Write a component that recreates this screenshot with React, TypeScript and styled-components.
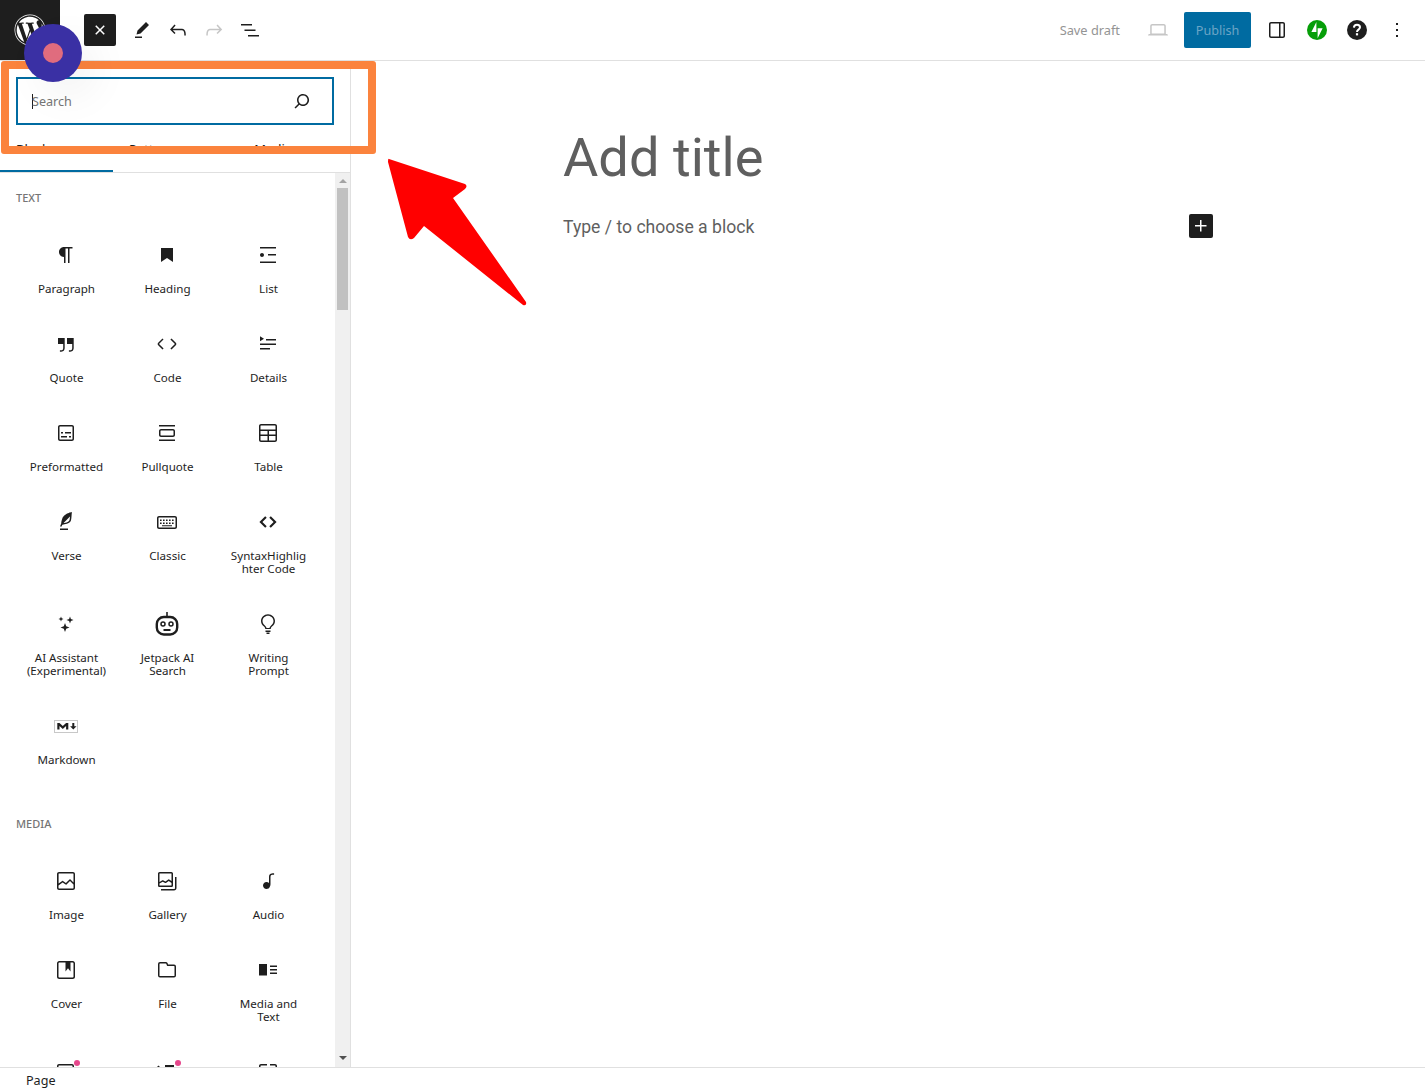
import React from "react";
import styled, { createGlobalStyle } from "styled-components";
import { FaWordpress } from "react-icons/fa";

const GlobalStyle = createGlobalStyle`
  html, body {
    margin: 0;
    padding: 0;
    background: #fff;
  }
  * {
    box-sizing: border-box;
  }
`;

const UI_FONT = `"Noto Sans", "Open Sans", sans-serif`;

const Page = styled.div`
  position: relative;
  display: flex;
  flex-direction: column;
  width: 1425px;
  height: 1092px;
  overflow: hidden;
  font-family: ${UI_FONT};
  color: #1e1e1e;
  background: #fff;
`;

const Header = styled.header`
  display: flex;
  align-items: center;
  flex: 0 0 61px;
  border-bottom: 1px solid #e0e0e0;
`;

const LogoBox = styled.div`
  display: flex;
  align-items: center;
  justify-content: center;
  width: 60px;
  height: 60px;
  background: #1e1e1e;
  color: #fff;
`;

const ToolGroup = styled.div`
  display: flex;
  align-items: center;
  gap: 4px;
  margin-left: 24px;
`;

const ToolButton = styled.div<{ $active?: boolean; $muted?: boolean }>`
  display: flex;
  align-items: center;
  justify-content: center;
  width: 32px;
  height: 32px;
  border-radius: 2px;
  margin-right: ${(p) => (p.$active ? "6px" : "0")};
  background: ${(p) => (p.$active ? "#1e1e1e" : "transparent")};
  color: ${(p) => (p.$active ? "#fff" : p.$muted ? "#c6c6c6" : "#1e1e1e")};
`;

const HeaderRight = styled.div`
  display: flex;
  align-items: center;
  margin-left: auto;
  padding-right: 8px;
`;

const SaveDraft = styled.span`
  font-size: 12.8px;
  color: #949494;
  margin-right: 26px;
`;

const DeviceIcon = styled.div`
  display: flex;
  color: #c6c6c6;
  margin-right: 14px;
`;

const PublishButton = styled.div`
  display: flex;
  align-items: center;
  justify-content: center;
  width: 67px;
  height: 36px;
  border-radius: 2px;
  background: #006ba1;
  color: #6ba5c6;
  font-size: 12.6px;
  margin-right: 6px;
`;

const SettingsButton = styled.div`
  display: flex;
  align-items: center;
  justify-content: center;
  width: 40px;
  height: 40px;
`;

const Body = styled.div`
  display: flex;
  flex: 1;
  min-height: 0;
`;

const Inserter = styled.aside`
  display: flex;
  flex-direction: column;
  flex: 0 0 351px;
  border-right: 1px solid #e0e0e0;
`;

const SearchArea = styled.div`
  padding: 16px 16px 0;
`;

const SearchBox = styled.div`
  display: flex;
  align-items: center;
  justify-content: space-between;
  height: 48px;
  padding: 0 18px 0 14px;
  border: 2px solid #006ba1;
  font-size: 12.6px;
  color: #757575;
`;

const SearchIcon = styled.span`
  display: flex;
  color: #1e1e1e;
`;

const Caret = styled.span`
  display: inline-block;
  width: 1px;
  height: 15px;
  margin-right: -1px;
  background: #1e1e1e;
  vertical-align: -3px;
`;

const Tabs = styled.div`
  display: flex;
  flex: 0 0 48px;
  border-bottom: 1px solid #e0e0e0;
`;

const Tab = styled.div<{ $active?: boolean }>`
  flex: 1 1 auto;
  height: 47px;
  padding: 16px 16px 0;
  font-size: 13px;
  line-height: 16px;
  border-bottom: 2px solid ${(p) => (p.$active ? "#006ba1" : "transparent")};
`;

const ScrollRow = styled.div`
  display: flex;
  flex: 1;
  min-height: 0;
`;

const BlockList = styled.div`
  flex: 1;
  min-width: 0;
  overflow: hidden;
  padding: 17px 0 0 16px;
`;

const GroupTitle = styled.h2`
  margin: 0 0 17px;
  font-size: 11px;
  font-weight: 500;
  line-height: 16px;
  text-transform: uppercase;
  color: #757575;
`;

const BlockGrid = styled.div`
  display: grid;
  grid-template-columns: repeat(3, 101px);
  margin-bottom: 33px;
`;

const BlockItem = styled.div`
  display: flex;
  flex-direction: column;
  align-items: center;
  padding: 20px 0 17px;
  text-align: center;
`;

const BlockIcon = styled.div`
  position: relative;
  display: flex;
  width: 24px;
  height: 24px;
  margin: 0 1px 15px 0;
`;

const Dot = styled.span`
  position: absolute;
  top: 0;
  right: -2px;
  width: 6px;
  height: 6px;
  border-radius: 50%;
  background: #e6478c;
`;

const BlockLabel = styled.span`
  max-width: 82px;
  font-size: 11.6px;
  line-height: 13px;
  overflow-wrap: anywhere;
`;

const ScrollTrack = styled.div`
  display: flex;
  flex-direction: column;
  align-items: center;
  flex: 0 0 15px;
  background: #f0f0f0;
`;

const ScrollArrow = styled.span<{ $down?: boolean }>`
  flex: 0 0 4px;
  width: 8px;
  height: 4px;
  margin-top: ${(p) => (p.$down ? "auto" : "6px")};
  margin-bottom: ${(p) => (p.$down ? "7px" : "0")};
  border-left: 4px solid transparent;
  border-right: 4px solid transparent;
  ${(p) =>
    p.$down
      ? "border-top: 4px solid #505050;"
      : "border-bottom: 4px solid #a3a3a3;"}
`;

const ScrollThumb = styled.div`
  width: 11px;
  height: 122px;
  margin-top: 5px;
  background: #c1c1c1;
`;

const Editor = styled.main`
  flex: 1;
  min-width: 0;
  padding: 59px 0 0 212px;
  font-family: Roboto, sans-serif;
  color: #5f5f5f;
`;

const TitleText = styled.h1`
  margin: 0;
  font-size: 54.2px;
  font-weight: 400;
  line-height: 76px;
`;

const ParagraphRow = styled.div`
  display: flex;
  align-items: flex-start;
  justify-content: space-between;
  width: 650px;
  margin-top: 18px;
`;

const ParagraphHint = styled.p`
  margin: -1px 0 0;
  font-size: 17.6px;
  line-height: 28px;
`;

const AddBlock = styled.div`
  display: flex;
  align-items: center;
  justify-content: center;
  width: 24px;
  height: 24px;
  border-radius: 2px;
  background: #1e1e1e;
  color: #fff;
`;

const Footer = styled.footer`
  flex: none;
  height: 25px;
  padding-left: 26px;
  border-top: 1px solid #e0e0e0;
  font-size: 12.6px;
  line-height: 26px;
`;

/* tutorial annotations painted over the editor */
const Highlight = styled.div`
  position: absolute;
  left: 1px;
  top: 61px;
  width: 375px;
  height: 93px;
  border: 8px solid #fb833d;
  border-radius: 3px;
`;

const Pointer = styled.svg`
  position: absolute;
  left: 380px;
  top: 150px;
`;

const ClickDot = styled.div`
  position: absolute;
  left: 24px;
  top: 24px;
  display: flex;
  align-items: center;
  justify-content: center;
  width: 58px;
  height: 58px;
  border-radius: 50%;
  background: #3a30a4;
  box-shadow: 15px 15px 40px rgba(0, 0, 0, 0.05);
`;

const ClickDotCore = styled.span`
  width: 20px;
  height: 20px;
  border-radius: 50%;
  background: #e06c7e;
`;

const Icon: React.FC<{ d: string }> = ({ d }) => (
  <svg width={24} height={24} viewBox="0 0 24 24" fill="currentColor">
    <path d={d} fillRule="evenodd" clipRule="evenodd" />
  </svg>
);

const paths = {
  pencil: "m19 7-3-3-8.5 8.5-1 4 4-1L19 7Zm-7 11.5H5V20h7v-1.5Z",
  undo: "M18.3 11.7c-.6-.6-1.4-.9-2.3-.9H6.7l2.9-3.3-1.1-1-4.5 5L8.5 16l1-1-2.7-2.7H16c.5 0 .9.2 1.3.5 1 1 1 3.4 1 4.5v.3h1.5v-.2c0-1.5 0-4.3-1.5-5.7z",
  redo: "M15.6 6.5l-1.1 1 2.9 3.3H8c-.9 0-1.7.3-2.3.9-1.4 1.5-1.4 4.2-1.4 5.6v.2h1.5v-.3c0-1.1 0-3.5 1-4.5.3-.3.7-.5 1.3-.5h9.2L14.5 15l1.1 1.1 4.6-4.6-4.6-5z",
  listView: "M3 6h11v1.5H3V6Zm3.5 5.5h11V13h-11v-1.5ZM21 17H10v1.5h11V17Z",
  close: "M12 13.06l3.712 3.713 1.061-1.06L13.061 12l3.712-3.712-1.06-1.06L12 10.938 8.288 7.227l-1.061 1.06L10.939 12l-3.712 3.712 1.06 1.061L12 13.061z",
  search: "M13 5c-3.3 0-6 2.7-6 6 0 1.4.5 2.7 1.3 3.7l-3.8 3.8 1.1 1.1 3.8-3.8c1 .8 2.3 1.3 3.7 1.3 3.3 0 6-2.7 6-6S16.3 5 13 5zm0 10.5c-2.5 0-4.5-2-4.5-4.5s2-4.5 4.5-4.5 4.5 2 4.5 4.5-2 4.5-4.5 4.5z",
  desktop: "M20.5 16h-.7V8c0-1.1-.9-2-2-2H6.2c-1.1 0-2 .9-2 2v8h-.7c-.8 0-1.5.7-1.5 1.5h20c0-.8-.7-1.5-1.5-1.5zM5.7 8c0-.3.2-.5.5-.5h11.6c.3 0 .5.2.5.5v7.6H5.7V8z",
  sidebar: "M18 4H6c-1.1 0-2 .9-2 2v12c0 1.1.9 2 2 2h12c1.1 0 2-.9 2-2V6c0-1.1-.9-2-2-2zm-4 14.5H6c-.3 0-.5-.2-.5-.5V6c0-.3.2-.5.5-.5h8v13zm4.5-.5c0 .3-.2.5-.5.5h-2.5v-13H18c.3 0 .5.2.5.5v12z",
  more: "M13 19h-2v-2h2v2zm0-6h-2v-2h2v2zm0-6h-2V5h2v2z",
  plus: "M11 12.5V17.5H12.5V12.5H17.5V11H12.5V6H11V11H6V12.5H11Z",
  paragraph: "m9.99609 14v-.2251l.00391.0001v6.225h1.5v-14.5h2.5v14.5h1.5v-14.5h3v-1.5h-8.50391c-2.76142 0-5 2.23858-5 5 0 2.7614 2.23858 5 5 5z",
  heading: "M6 5v14l6-4 6 4V5z",
  list: "M4 4v1.5h16V4H4zm8 8.5h8V11h-8v1.5zM4 20h16v-1.5H4V20zm4-8c0-1.1-.9-2-2-2s-2 .9-2 2 .9 2 2 2 2-.9 2-2z",
  quote: "M13 6v6h5.2v4c0 .8-.2 1.4-.5 1.7-.6.6-1.6.6-2.5.5h-.3v1.5h.5c1 0 2.3-.1 3.3-1 .6-.6 1-1.6 1-2.8V6H13zm-9 6h5.2v4c0 .8-.2 1.4-.5 1.7-.6.6-1.6.6-2.5.5h-.3v1.5h.5c1 0 2.3-.1 3.3-1 .6-.6 1-1.6 1-2.8V6H4v6z",
  code: "M20.8 10.7l-4.3-4.3-1.1 1.1 4.3 4.3c.1.1.1.3 0 .4l-4.3 4.3 1.1 1.1 4.3-4.3c.7-.8.7-1.9 0-2.6zM4.2 11.8l4.3-4.3-1-1-4.3 4.3c-.7.7-.7 1.8 0 2.5l4.3 4.3 1.1-1.1-4.3-4.3c-.2-.1-.2-.3-.1-.4z",
  details: "M4 16h10v1.5H4V16Zm0-4.5h16V13H4v-1.5ZM10 7h10v1.5H10V7Zm-6-2.75 4 2.5-4 2.5v-5Z",
  preformatted: "M18 4H6c-1.1 0-2 .9-2 2v12c0 1.1.9 2 2 2h12c1.1 0 2-.9 2-2V6c0-1.1-.9-2-2-2zm.5 14c0 .3-.2.5-.5.5H6c-.3 0-.5-.2-.5-.5V6c0-.3.2-.5.5-.5h12c.3 0 .5.2.5.5v12zM7 16.5h6V15H7v1.5zm4-4h6V11h-6v1.5zM9 11H7v1.5h2V11zm6 5.5h2V15h-2v1.5z",
  pullquote: "M18 8H6c-1.1 0-2 .9-2 2v4c0 1.1.9 2 2 2h12c1.1 0 2-.9 2-2v-4c0-1.1-.9-2-2-2zm.5 6c0 .3-.2.5-.5.5H6c-.3 0-.5-.2-.5-.5v-4c0-.3.2-.5.5-.5h12c.3 0 .5.2.5.5v4zM4 4v1.5h16V4H4zm0 16h16v-1.5H4V20z",
  table: "M19 3H5c-1.1 0-2 .9-2 2v14c0 1.1.9 2 2 2h14c1.1 0 2-.9 2-2V5c0-1.1-.9-2-2-2zM5 4.5h14c.3 0 .5.2.5.5v3.5h-15V5c0-.3.2-.5.5-.5zm8 5.5h6.5v3.5H13V10zm-1.5 3.5h-7V10h7v3.5zm-7 5.5v-4h7v4.5H5c-.3 0-.5-.2-.5-.5zm14.5.5h-6V15h6.5v4c0 .3-.2.5-.5.5z",
  verse: "M17.8 2l-.9.3c-.1 0-3.6 1-5.2 2.1C10 5.5 9.3 6.5 8.9 7.1c-.6.9-1.7 4.7-1.7 6.3l-.9 2.3c-.2.4 0 .8.4 1 .1 0 .2.1.3.1.3 0 .6-.2.7-.5l.6-1.5c.3 0 .7-.1 1.2-.2.7-.1 1.4-.3 2.2-.5.8-.2 1.6-.5 2.4-.8.7-.3 1.4-.7 1.9-1.2s.8-1.2 1-1.9c.2-.7.3-1.6.4-2.4.1-.8.1-1.7.2-2.5 0-.8.1-1.5.2-2.1V2zm-1.9 5.6c-.1.8-.2 1.5-.3 2.1-.2.6-.4 1-.6 1.3-.3.3-.8.6-1.4.9-.7.3-1.4.5-2.2.8-.6.2-1.3.3-1.8.4L15 7.5c.3-.3.6-.7 1-1.1 0 .4 0 .8-.1 1.2zM6 20h8v-1.5H6V20z",
  classic: "M20 6H4c-1.1 0-2 .9-2 2v9c0 1.1.9 2 2 2h16c1.1 0 2-.9 2-2V8c0-1.1-.9-2-2-2zm.5 11c0 .3-.2.5-.5.5H4c-.3 0-.5-.2-.5-.5V8c0-.3.2-.5.5-.5h16c.3 0 .5.2.5.5v9zM5 9.5h1.6v1.6H5zm3 0h1.6v1.6H8zm3 0h1.6v1.6H11zm3 0h1.6v1.6H14zm3 0h1.6v1.6H17zM5 12.5h1.6v1.6H5zm3 0h1.6v1.6H8zm3 0h1.6v1.6H11zm3 0h1.6v1.6H14zm3 0h1.6v1.6H17zM7 15.2h10v1H7z",
  syntax: "M9.2 6.2 3.4 12l5.8 5.8 1.5-1.5L6.4 12l4.3-4.3zm5.6 0-1.5 1.5 4.3 4.3-4.3 4.3 1.5 1.5 5.8-5.8z",
  sparkles: "M11 11l1.2 3.3 3.3 1.2-3.3 1.2-1.2 3.3-1.2-3.3-3.3-1.2 3.3-1.2zM16 4.5l.9 2.6 2.6.9-2.6.9-.9 2.6-.9-2.6-2.6-.9 2.6-.9zM7 4.5l.7 1.8 1.8.7-1.8.7-.7 1.8-.7-1.8-1.8-.7 1.8-.7z",
  bulb: "M12 2.2c-3.9 0-7 3-7 6.8 0 2.5 1.3 4.3 3 5.6.7.6 1.2 1.5 1.3 2.4h5.4c.1-.9.6-1.8 1.3-2.4 1.7-1.3 3-3.1 3-5.6 0-3.8-3.1-6.8-7-6.8zm0 1.5c3 0 5.5 2.3 5.5 5.3 0 1.9-1 3.3-2.4 4.4-.8.7-1.4 1.5-1.7 2.6h-2.8c-.3-1.1-.9-1.9-1.7-2.6C7.5 12.3 6.5 10.9 6.5 9c0-3 2.5-5.3 5.5-5.3zM9.5 18.5h5V20h-5zM10.5 20.5h3V22h-3z",
  image: "M19 3H5c-1.1 0-2 .9-2 2v14c0 1.1.9 2 2 2h14c1.1 0 2-.9 2-2V5c0-1.1-.9-2-2-2zM5 4.5h14c.3 0 .5.2.5.5v8.4l-3-2.9c-.3-.3-.8-.3-1 0L11.9 14 9 12c-.3-.2-.6-.2-.8 0l-3.6 2.6V5c-.1-.3.1-.5.4-.5zm14 15H5c-.3 0-.5-.2-.5-.5v-2.4l4.1-3 3 1.9c.3.2.7.2.9-.1L16 12l3.5 3.4V19c0 .3-.2.5-.5.5z",
  gallery: "M16.375 4.5H4.625a.125.125 0 0 0-.125.125v8.254l2.859-1.54a.75.75 0 0 1 .68-.016l2.384 1.142 2.89-2.074a.75.75 0 0 1 .874 0l2.313 1.66V4.625a.125.125 0 0 0-.125-.125Zm.125 9.398-2.75-1.975-2.813 2.02a.75.75 0 0 1-.76.067l-2.444-1.17L4.5 14.583v1.792c0 .069.056.125.125.125h11.75a.125.125 0 0 0 .125-.125v-2.477ZM4.625 3C3.728 3 3 3.728 3 4.625v11.75C3 17.273 3.728 18 4.625 18h11.75c.898 0 1.625-.727 1.625-1.625V4.625C18 3.728 17.273 3 16.375 3H4.625ZM20 8v11c0 .69-.31 1-.999 1H6v1.5h13.001c1.52 0 2.499-.982 2.499-2.5V8H20Z",
  audio: "M17.7 4.3c-1.2 0-2.8 0-3.8 1-.6.6-.9 1.5-.9 2.6V14c-.6-.6-1.5-1-2.5-1C8.6 13 7 14.6 7 16.5S8.6 20 10.5 20c1.5 0 2.8-1 3.3-2.3.5-.8.7-1.8.7-2.5V7.9c0-.7.2-1.2.5-1.6.6-.6 1.8-.6 2.8-.6h.3V4.3h-.4z",
  cover: "M18.7 3H5.3C4 3 3 4 3 5.3v13.4C3 20 4 21 5.3 21h13.4c1.3 0 2.3-1 2.3-2.3V5.3C21 4 20 3 18.7 3zm.8 15.7c0 .4-.4.8-.8.8H5.3c-.4 0-.8-.4-.8-.8V5.3c0-.4.4-.8.8-.8h6.2v8.9l2.5-3.1 2.5 3.1V4.5h2.2c.4 0 .8.4.8.8v13.4z",
  file: "M12.848 8a1 1 0 0 1-.914-.594l-.723-1.63a.5.5 0 0 0-.447-.276H5a.5.5 0 0 0-.5.5v11.5a.5.5 0 0 0 .5.5h14a.5.5 0 0 0 .5-.5v-9A.5.5 0 0 0 19 8h-6.152Zm.612-1.5a.5.5 0 0 1-.462-.31l-.445-1.084A2 2 0 0 0 10.763 4H5a2 2 0 0 0-2 2v11.5a2 2 0 0 0 2 2h14a2 2 0 0 0 2-2v-9a2 2 0 0 0-2-2h-5.54Z",
  mediaText: "M3 6v11.5h8V6H3Zm11 3h7V7.5h-7V9Zm7 3.5h-7V11h7v1.5ZM14 16h7v-1.5h-7V16Z",
  video: "M5 4h13c1.1 0 2 .9 2 2v14h-1.5V6c0-.3-.2-.5-.5-.5H5c-.3 0-.5.2-.5.5v14H3V6c0-1.1.9-2 2-2z",
  slideshow: "M2 7l1.5-1.5L5 7v3H2zM10 5h9v6h-9z",
  columns: "M3 6c0-1.1.9-2 2-2h6v1.5H5c-.3 0-.5.2-.5.5v14H3zM14 4h5c1.1 0 2 .9 2 2v14h-1.5V6c0-.3-.2-.5-.5-.5h-5z",
};

const RobotIcon = () => (
  <svg width={24} height={24} viewBox="0 0 24 24" fill="none">
    <path d="M12 0v5" stroke="currentColor" strokeWidth="1.6" />
    <rect x="1.8" y="5" width="20.4" height="17.5" rx="7" stroke="currentColor" strokeWidth="2.4" />
    <circle cx="8" cy="12" r="2" stroke="currentColor" strokeWidth="1.5" />
    <circle cx="16" cy="12" r="2" stroke="currentColor" strokeWidth="1.5" />
    <path d="M8.5 18h7" stroke="currentColor" strokeWidth="2" />
  </svg>
);

const MarkdownIcon = () => (
  <svg width={24} height={24} viewBox="0 0 24 24">
    <rect x="0.5" y="6.5" width="23" height="12" fill="#fff" stroke="#c8c8c8" />
    <path
      fill="currentColor"
      d="M3.3 15.5V9h2.2l3.3 3 3.3-3h2.2v6.5h-2.2v-3.6l-3.3 3-3.3-3v3.6zM19.3 15.5l-3.2-3.2h2.2V9h2v3.3h2.2z"
    />
  </svg>
);

const JetpackIcon = () => (
  <svg width={20} height={20} viewBox="0 0 32 32">
    <circle cx="16" cy="16" r="16" fill="#069e08" />
    <path fill="#fff" d="M15 19H7l8-16zM17 29V13h8z" />
  </svg>
);

const HelpIcon = () => (
  <svg width={24} height={24} viewBox="0 0 24 24">
    <circle cx="12" cy="12" r="10" fill="#1e1e1e" />
    <path
      d="M8.9 9.6c.1-1.9 1.4-2.9 3.1-2.9 1.8 0 3 1 3 2.6 0 2.3-3 2.3-3 4.6"
      fill="none"
      stroke="#fff"
      strokeWidth="2"
    />
    <rect x="10.9" y="15.2" width="2.2" height="2.2" fill="#fff" />
  </svg>
);

type Block = { name: string; icon: React.ReactNode; dot?: boolean; cutOff?: boolean };

const glyph = (d: string) => <Icon d={d} />;

const textBlocks: Block[] = [
  { name: "Paragraph", icon: glyph(paths.paragraph) },
  { name: "Heading", icon: glyph(paths.heading) },
  { name: "List", icon: glyph(paths.list) },
  { name: "Quote", icon: glyph(paths.quote) },
  { name: "Code", icon: glyph(paths.code) },
  { name: "Details", icon: glyph(paths.details) },
  { name: "Preformatted", icon: glyph(paths.preformatted) },
  { name: "Pullquote", icon: glyph(paths.pullquote) },
  { name: "Table", icon: glyph(paths.table) },
  { name: "Verse", icon: glyph(paths.verse) },
  { name: "Classic", icon: glyph(paths.classic) },
  { name: "SyntaxHighlighter Code", icon: glyph(paths.syntax) },
  { name: "AI Assistant (Experimental)", icon: glyph(paths.sparkles) },
  { name: "Jetpack AI Search", icon: <RobotIcon /> },
  { name: "Writing Prompt", icon: glyph(paths.bulb) },
  { name: "Markdown", icon: <MarkdownIcon /> },
];

// the last row runs under the footer, only the tops of its icons show
const mediaBlocks: Block[] = [
  { name: "Image", icon: glyph(paths.image) },
  { name: "Gallery", icon: glyph(paths.gallery) },
  { name: "Audio", icon: glyph(paths.audio) },
  { name: "Cover", icon: glyph(paths.cover) },
  { name: "File", icon: glyph(paths.file) },
  { name: "Media and Text", icon: glyph(paths.mediaText) },
  { name: "video", icon: glyph(paths.video), dot: true, cutOff: true },
  { name: "slideshow", icon: glyph(paths.slideshow), dot: true, cutOff: true },
  { name: "columns", icon: glyph(paths.columns), cutOff: true },
];

const BlockSection: React.FC<{ title: string; blocks: Block[] }> = ({ title, blocks }) => (
  <section>
    <GroupTitle>{title}</GroupTitle>
    <BlockGrid>
      {blocks.map((block) => (
        <BlockItem key={block.name}>
          <BlockIcon>
            {block.icon}
            {block.dot && <Dot />}
          </BlockIcon>
          {!block.cutOff && <BlockLabel>{block.name}</BlockLabel>}
        </BlockItem>
      ))}
    </BlockGrid>
  </section>
);

export default function App() {
  return (
    <Page>
      <GlobalStyle />
      <Header>
        <LogoBox>
          <FaWordpress size={32} />
        </LogoBox>
        <ToolGroup>
          <ToolButton $active>
            <Icon d={paths.close} />
          </ToolButton>
          <ToolButton>
            <Icon d={paths.pencil} />
          </ToolButton>
          <ToolButton>
            <Icon d={paths.undo} />
          </ToolButton>
          <ToolButton $muted>
            <Icon d={paths.redo} />
          </ToolButton>
          <ToolButton>
            <Icon d={paths.listView} />
          </ToolButton>
        </ToolGroup>
        <HeaderRight>
          <SaveDraft>Save draft</SaveDraft>
          <DeviceIcon>
            <Icon d={paths.desktop} />
          </DeviceIcon>
          <PublishButton>Publish</PublishButton>
          <SettingsButton>
            <Icon d={paths.sidebar} />
          </SettingsButton>
          <SettingsButton>
            <JetpackIcon />
          </SettingsButton>
          <SettingsButton>
            <HelpIcon />
          </SettingsButton>
          <SettingsButton>
            <Icon d={paths.more} />
          </SettingsButton>
        </HeaderRight>
      </Header>
      <Body>
        <Inserter>
          <SearchArea>
            <SearchBox>
              <span>
                <Caret />
                Search
              </span>
              <SearchIcon>
                <Icon d={paths.search} />
              </SearchIcon>
            </SearchBox>
          </SearchArea>
          <Tabs>
            <Tab $active>Blocks</Tab>
            <Tab>Patterns</Tab>
            <Tab>Media</Tab>
          </Tabs>
          <ScrollRow>
            <BlockList>
              <BlockSection title="Text" blocks={textBlocks} />
              <BlockSection title="Media" blocks={mediaBlocks} />
            </BlockList>
            <ScrollTrack>
              <ScrollArrow />
              <ScrollThumb />
              <ScrollArrow $down />
            </ScrollTrack>
          </ScrollRow>
        </Inserter>
        <Editor>
          <TitleText>Add title</TitleText>
          <ParagraphRow>
            <ParagraphHint>Type / to choose a block</ParagraphHint>
            <AddBlock>
              <Icon d={paths.plus} />
            </AddBlock>
          </ParagraphRow>
        </Editor>
      </Body>
      <Footer>Page</Footer>

      <Highlight />
      <Pointer width={150} height={160} viewBox="380 150 150 160">
        <path
          d="M389 159 L465 184 Q468 186 465 189 L453 198 L526 302 Q527 306 523 305 L424 226 L414 238 Q410 241 408 237 L388 162 Q388 158 389 159 Z"
          fill="#ff0000"
        />
      </Pointer>
      <ClickDot>
        <ClickDotCore />
      </ClickDot>
    </Page>
  );
}
